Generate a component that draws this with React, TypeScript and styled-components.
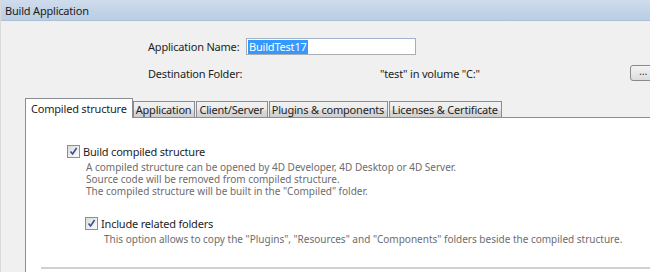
import styled, { createGlobalStyle } from "styled-components";

const GlobalStyle = createGlobalStyle`
     html, body {
          margin: 0;
          padding: 0;
          background: #f0f0f0;
     }
     body {
          font-family: "Noto Sans", "Open Sans", sans-serif;
          font-size: 11px;
          letter-spacing: -0.2px;
          color: #1e1e1e;
     }
`;

const Window = styled.div`
     width: 650px;
     height: 272px;
     overflow: hidden;
     background: #f0f0f0;
     border-left: 1px solid #dadada;
     box-sizing: border-box;
     display: flex;
     flex-direction: column;
`;

const TitleBar = styled.div`
     height: 20px;
     flex-shrink: 0;
     display: flex;
     align-items: center;
     padding-left: 4px;
     background: linear-gradient(#cfdcec, #b9cde4);
     border-bottom: 1px solid #aebfd6;
     color: #1b1b1b;
`;

const Form = styled.div`
     display: grid;
     grid-template-columns: 98px 1fr;
     row-gap: 10px;
     align-items: center;
     padding: 17px 0 0 147px;
`;

const Label = styled.span`
     white-space: nowrap;
`;

const NameInput = styled.div`
     width: 170px;
     height: 17px;
     box-sizing: border-box;
     border: 1px solid #abadb3;
     border-top-color: #a0b4cf;
     background: #fff;
     display: flex;
     align-items: center;
     padding-left: 1px;
`;

const Selected = styled.span`
     background: #3399ff;
     color: #fff;
     line-height: 14px;
     padding: 0 1px;
`;

const FolderRow = styled.div`
     display: flex;
     align-items: center;
     margin-right: -14px;
`;

const FolderValue = styled.span`
     margin-left: 134px;
     white-space: nowrap;
`;

const BrowseButton = styled.div`
     margin-left: auto;
     width: 34px;
     height: 16px;
     box-sizing: border-box;
     border: 1px solid #8a8a8a;
     border-radius: 3px;
     background: linear-gradient(#f4f4f4, #dcdcdc);
     font-size: 11px;
     line-height: 10px;
     padding-left: 8px;
     color: #444;
`;

const TabArea = styled.div`
     margin: 17px 0 0 24px;
     flex: 1;
     display: flex;
     flex-direction: column;
`;

const TabStrip = styled.div`
     display: flex;
     align-items: flex-end;
     height: 20px;
     position: relative;
     z-index: 1;
`;

const Tab = styled.div<{ $active?: boolean }>`
     height: ${(p) => (p.$active ? "20px" : "17px")};
     box-sizing: border-box;
     padding: ${(p) => (p.$active ? "0 5px" : "0 3px 0 2px")};
     margin-right: ${(p) => (p.$active ? "0" : "1px")};
     border: 1px solid #898c95;
     border-bottom: ${(p) => (p.$active ? "none" : "1px solid #898c95")};
     background: ${(p) =>
          p.$active ? "#fff" : "linear-gradient(#f2f2f2 0%, #ebebeb 50%, #dddddd 51%, #cfcfcf 100%)"};
     display: flex;
     align-items: center;
     white-space: nowrap;
`;

const Panel = styled.div`
     flex: 1;
     margin-top: -1px;
     background: #fff;
     border-top: 1px solid #898c95;
     border-left: 1px solid #898c95;
     padding: 26px 0 0 41px;
     display: flex;
     flex-direction: column;
`;

const Option = styled.div<{ $indent?: number }>`
     margin-left: ${(p) => p.$indent || 0}px;
     margin-bottom: 19px;
`;

const CheckRow = styled.label`
     display: flex;
     align-items: center;
     gap: 3px;
     height: 14px;
`;

const Box = styled.span`
     width: 13px;
     height: 13px;
     box-sizing: border-box;
     border: 1px solid #8e8f8f;
     background: linear-gradient(135deg, #dcdcdc, #fbfbfb);
     display: flex;
     align-items: center;
     justify-content: center;
`;

const Description = styled.div`
     margin: 3px 0 0 19px;
     font-size: 10px;
     letter-spacing: 0;
     line-height: 12px;
     color: #6d6d6d;
     white-space: nowrap;
`;

const Separator = styled.div`
     margin: auto 0 3px -26px;
     height: 2px;
     background: #d0d0d0;
`;

function Check() {
     return (
          <Box>
               <svg width="9" height="9" viewBox="0 0 9 9">
                    <path d="M1.5 4.5 L3.6 7 L7.6 1" fill="none" stroke="#3c4f8c" strokeWidth="1.6" />
               </svg>
          </Box>
     );
}

const tabs = ["Application", "Client/Server", "Plugins & components", "Licenses & Certificate"];

function App() {
     return (
          <Window>
               <GlobalStyle />
               <TitleBar>Build Application</TitleBar>

               <Form>
                    <Label>Application Name:</Label>
                    <NameInput>
                         <Selected>BuildTest17</Selected>
                    </NameInput>
                    <Label>Destination Folder:</Label>
                    <FolderRow>
                         <FolderValue>"test" in volume "C:"</FolderValue>
                         <BrowseButton>...</BrowseButton>
                    </FolderRow>
               </Form>

               <TabArea>
                    <TabStrip>
                         <Tab $active>Compiled structure</Tab>
                         {tabs.map((t) => (
                              <Tab key={t}>{t}</Tab>
                         ))}
                    </TabStrip>
                    <Panel>
                         <Option>
                              <CheckRow>
                                   <Check />
                                   Build compiled structure
                              </CheckRow>
                              <Description>
                                   A compiled structure can be opened by 4D Developer, 4D Desktop or 4D Server.
                                   <br />
                                   Source code will be removed from compiled structure.
                                   <br />
                                   The compiled structure will be built in the "Compiled" folder.
                              </Description>
                         </Option>
                         <Option $indent={18}>
                              <CheckRow>
                                   <Check />
                                   Include related folders
                              </CheckRow>
                              <Description>
                                   This option allows to copy the "Plugins", "Resources" and "Components" folders beside the compiled structure.
                              </Description>
                         </Option>
                         <Separator />
                    </Panel>
               </TabArea>
          </Window>
     );
}

export default App;
